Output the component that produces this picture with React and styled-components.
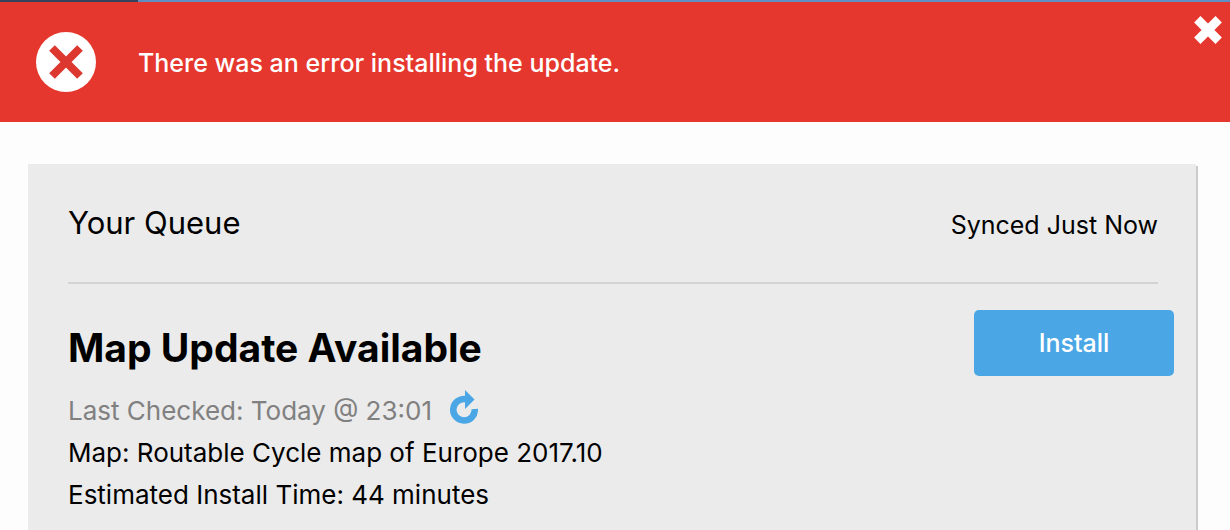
import React from "react";
import styled, { createGlobalStyle } from "styled-components";

const App = () => {
  return (
    <Page>
      <GlobalStyle />
      <TopLine>
        <TopLineTab />
      </TopLine>
      <Banner role="alert">
        <ErrorIcon viewBox="0 0 60 60" aria-hidden="true">
          <circle cx="30" cy="30" r="30" fill="#fff" />
          <path d="M16 16L44 44M44 16L16 44" stroke="#dc382f" strokeWidth="8" />
        </ErrorIcon>
        <Message>There was an error installing the update.</Message>
        <CloseButton type="button" aria-label="Close">
          <CloseIcon viewBox="0 0 28 28" aria-hidden="true">
            <path d="M3.3 3.3L24.7 24.7M24.7 3.3L3.3 24.7" stroke="#fff" strokeWidth="9" />
          </CloseIcon>
        </CloseButton>
      </Banner>
      <Queue>
        <QueueHeader>
          <QueueTitle>Your Queue</QueueTitle>
          <Synced>Synced Just Now</Synced>
        </QueueHeader>
        <Update>
          <Details>
            <UpdateTitle>Map Update Available</UpdateTitle>
            <Line $muted>
              Last Checked: Today @ 23:01
              <RefreshButton type="button" aria-label="Check again">
                <RefreshIcon viewBox="0 0 28 34" aria-hidden="true">
                  <path
                    d="M16 9.2A10.75 10.75 0 1 0 24.75 19"
                    fill="none"
                    stroke="#4aa6e5"
                    strokeWidth="6.5"
                  />
                  <path d="M15 0L24.5 9.5L15 19Z" fill="#4aa6e5" />
                </RefreshIcon>
              </RefreshButton>
            </Line>
            <Line>Map: Routable Cycle map of Europe 2017.10</Line>
            <Line>Estimated Install Time: 44 minutes</Line>
          </Details>
          <InstallButton type="button">Install</InstallButton>
        </Update>
      </Queue>
    </Page>
  );
};

export default App;

const GlobalStyle = createGlobalStyle`
  * {
    box-sizing: border-box;
  }
  body {
    margin: 0;
    background-color: #fdfdfd;
    color: #000;
    font-family: Inter, "Liberation Sans", sans-serif;
    font-size: 25px;
    line-height: 32px;
    overflow-x: hidden;
    scrollbar-width: none;
  }
`;
const Page = styled.div`
  width: 100%;
`;
const TopLine = styled.div`
  height: 2px;
  background-color: #5f8fc4;
`;
const TopLineTab = styled.div`
  width: 138px;
  height: 2px;
  background-color: #36425a;
`;
const Banner = styled.div`
  display: flex;
  align-items: center;
  height: 120px;
  padding-left: 36px;
  padding-right: 8px;
  background-color: #e6372e;
  color: #fff;
`;
const ErrorIcon = styled.svg`
  width: 60px;
  height: 60px;
`;
const Message = styled.p`
  flex: 1;
  margin: 0;
  padding: 2px 0 0 42px;
  font-weight: 500;
`;
const Button = styled.button`
  padding: 0;
  border: 0;
  background: none;
  font: inherit;
  cursor: pointer;
`;
const CloseButton = styled(Button)`
  align-self: flex-start;
  margin-top: 14px;
`;
const CloseIcon = styled.svg`
  display: block;
  width: 28px;
  height: 28px;
`;
const Queue = styled.section`
  margin: 42px 34px 0 28px;
  padding: 0 22px 40px 40px;
  background-color: #ebebeb;
  box-shadow: 2px 2px 0 #cbcbcb;
`;
const QueueHeader = styled.header`
  display: flex;
  justify-content: space-between;
  align-items: baseline;
  height: 120px;
  margin-right: 16px;
  padding-top: 39px;
  border-bottom: 2px solid #d3d3d3;
`;
const QueueTitle = styled.h2`
  margin: 0;
  font-size: 31px;
  font-weight: 400;
  line-height: 40px;
`;
const Synced = styled.span`
  color: #000;
`;
const Update = styled.div`
  display: flex;
  justify-content: space-between;
  align-items: flex-start;
  padding-top: 26px;
`;
const Details = styled.div`
  padding-top: 14px;
`;
const UpdateTitle = styled.h1`
  margin: 0;
  padding-bottom: 18px;
  font-size: 39px;
  font-weight: 700;
  line-height: 48px;
`;
const Line = styled.p`
  display: flex;
  margin: 0;
  font-size: 26px;
  line-height: 42px;
  color: ${props => (props.$muted ? "#808080" : "#000")};
`;
const RefreshButton = styled(Button)`
  align-self: flex-start;
  margin-left: 18px;
`;
const RefreshIcon = styled.svg`
  display: block;
  width: 28px;
  height: 34px;
`;
const InstallButton = styled(Button)`
  width: 200px;
  height: 66px;
  border-radius: 5px;
  background-color: #4aa6e5;
  color: #fff;
  font-weight: 500;
`;
